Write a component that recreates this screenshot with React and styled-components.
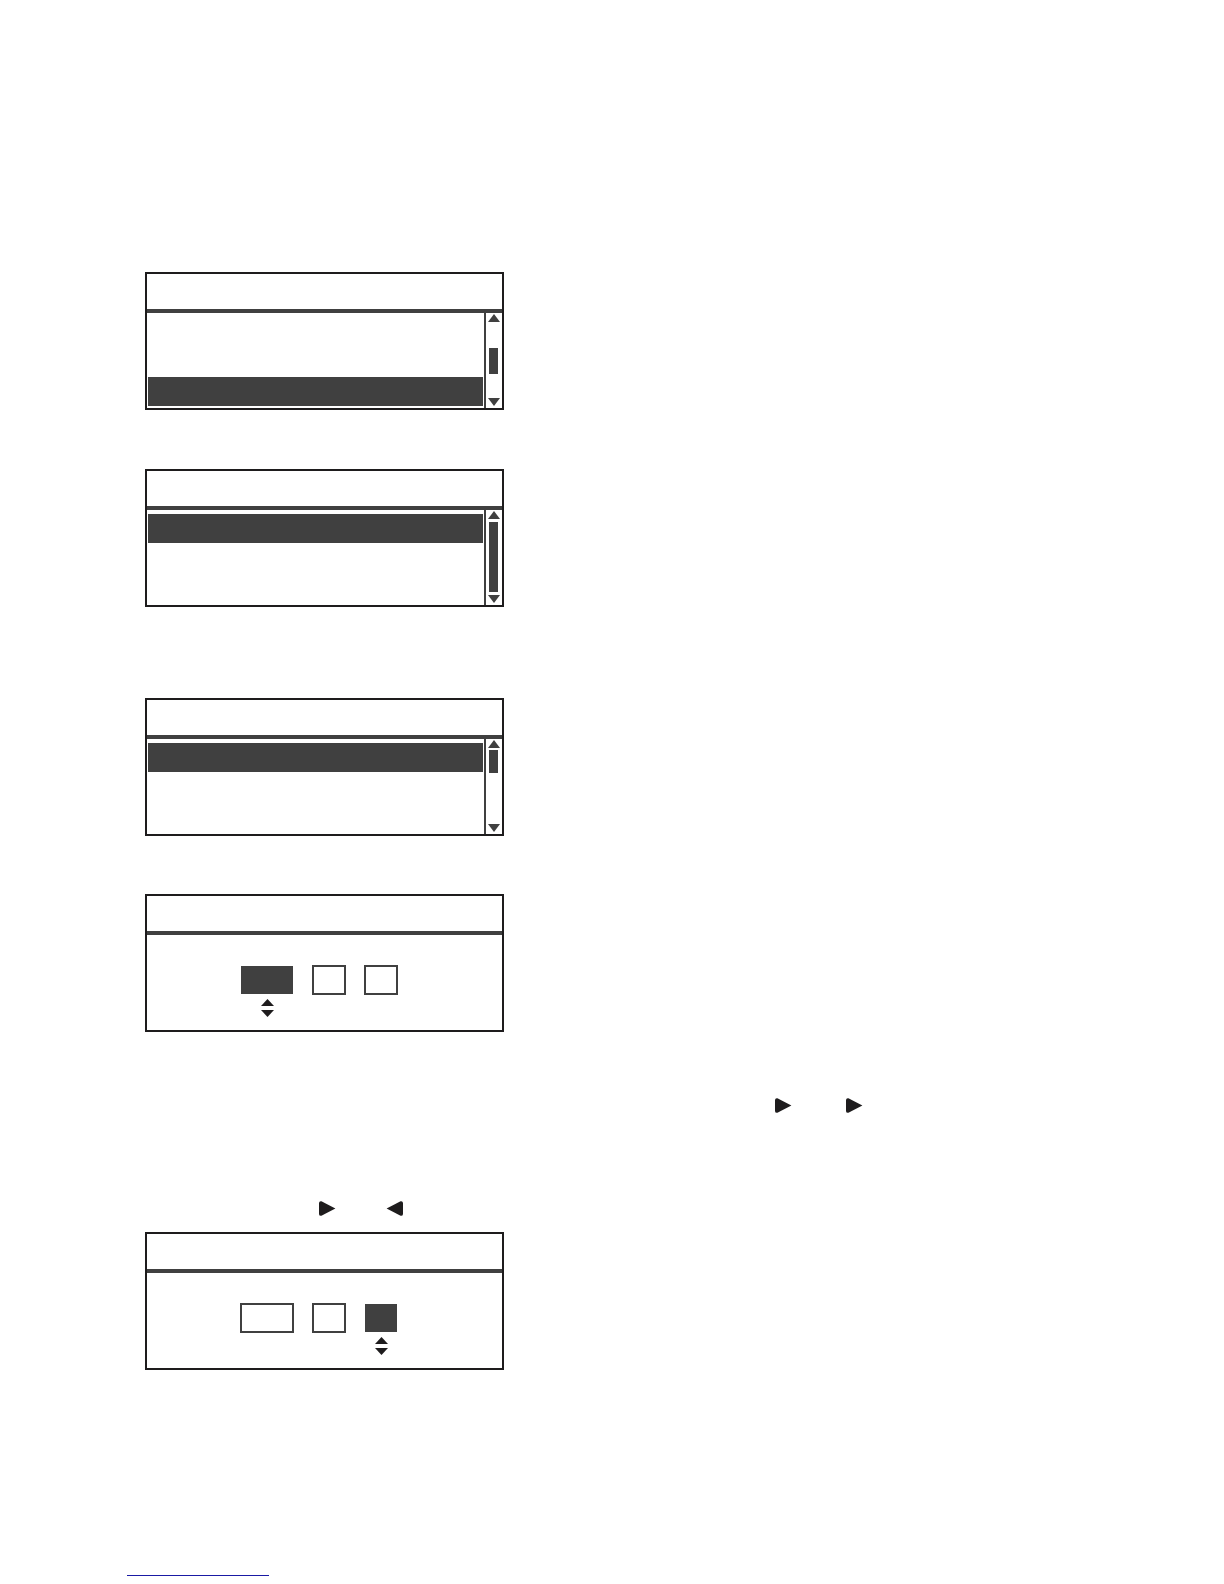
import React from "react";
import styled, { createGlobalStyle, css } from "styled-components";

const ink = "#1e1c1d";
const fill = "#404040";

const GlobalStyle = createGlobalStyle`
  *, *::before, *::after { box-sizing: border-box; }
  body {
    margin: 0;
    background: #fff;
    font-family: "Liberation Sans", Arial, sans-serif;
    font-size: 16px;
  }
  button, input { margin: 0; padding: 0; font: inherit; border: 0; border-radius: 0; background: none; }
  svg { display: block; }
`;

const Page = styled.main`
  display: flex;
  flex-direction: column;
  padding: 272px 40px 8px 145px;
`;

const Panel = styled.section`
  display: flex;
  flex-direction: column;
  width: 100%;
  max-width: 359px;
  margin-bottom: ${(p) => p.$after}px;
  border: 2px solid ${ink};
`;

const PanelHeader = styled.header`
  height: 39px;
  border-bottom: 4px solid ${fill};
`;

const ListBody = styled.div`
  display: flex;
  height: 95px;
`;

const Rows = styled.div`
  flex: 1;
  display: flex;
  flex-direction: column;
  gap: 1px;
  padding: 4px 1px 2px;
`;

const Row = styled.button`
  flex: 1;
  width: 100%;
  ${(p) => p.$selected && css`background: ${fill};`}
`;

const ScrollBar = styled.div`
  display: flex;
  flex-direction: column;
  align-items: center;
  width: 18px;
  padding: 1px 0 2px;
  border-left: 2px solid ${fill};
`;

const ArrowButton = styled.button`
  height: 8px;
`;

const Track = styled.div`
  flex: 1;
  width: 10px;
  padding-top: ${(p) => p.$offset}px;
`;

const Thumb = styled.div`
  width: 9px;
  height: ${(p) => p.$length}px;
  background: ${fill};
`;

const DateBody = styled.div`
  display: flex;
  justify-content: center;
  gap: 18px;
  height: 95px;
  padding: 30px 12px 0 0;
`;

const DateCell = styled.div`
  display: flex;
  flex-direction: column;
  align-items: center;
  gap: 4px;
`;

const DateField = styled.input`
  width: ${(p) => (p.$wide ? 54 : 34)}px;
  height: 30px;
  border: 2px solid ${fill};
  text-align: center;
  ${(p) => p.$selected && css`
    border: 1px solid transparent;
    background: ${fill};
    background-clip: padding-box;
    color: #fff;
  `}
`;

const Stepper = styled.div`
  display: flex;
  flex-direction: column;
  gap: 4px;
  padding-left: 2px;
`;

const StepButton = styled.button`
  height: 7px;
`;

const KeyLine = styled.div`
  display: flex;
  gap: ${(p) => p.$gap}px;
  padding-left: ${(p) => p.$indent}px;
  margin-bottom: ${(p) => p.$after}px;
`;

const FooterLink = styled.a`
  width: 142px;
  height: 1px;
  margin-left: -18px;
  background: #1a1aa4;
`;

function Triangle({ down, width, height, color }) {
  const d = down
    ? `M0 0H${width}L${width / 2} ${height}Z`
    : `M${width / 2} 0L${width} ${height}H0Z`;
  return (
    <svg width={width} height={height} viewBox={`0 0 ${width} ${height}`} aria-hidden="true">
      <path d={d} fill={color} />
    </svg>
  );
}

function KeyArrow({ left }) {
  return (
    <svg width="17" height="15" viewBox="0 0 17 15" role="img" aria-label={left ? "Left" : "Right"}>
      <path
        d={
          left
            ? "M0.6 7.5L14.6 0.2Q16.8 -0.2 17 2V13Q16.8 15.2 14.6 14.8Z"
            : "M16.4 7.5L2.4 0.2Q0.2 -0.2 0 2V13Q0.2 15.2 2.4 14.8Z"
        }
        fill={ink}
      />
    </svg>
  );
}

function ListPanel({ selected, offset, length, after }) {
  return (
    <Panel $after={after}>
      <PanelHeader />
      <ListBody>
        <Rows>
          {[0, 1, 2].map((i) => (
            <Row key={i} type="button" aria-label={`Item ${i + 1}`} $selected={i === selected} />
          ))}
        </Rows>
        <ScrollBar>
          <ArrowButton type="button" aria-label="Scroll up">
            <Triangle width={12} height={8} color={fill} />
          </ArrowButton>
          <Track $offset={offset}>
            <Thumb $length={length} />
          </Track>
          <ArrowButton type="button" aria-label="Scroll down">
            <Triangle down width={12} height={8} color={fill} />
          </ArrowButton>
        </ScrollBar>
      </ListBody>
    </Panel>
  );
}

const dateParts = ["Year", "Month", "Day"];

function DatePanel({ selected, after }) {
  return (
    <Panel $after={after}>
      <PanelHeader />
      <DateBody>
        {dateParts.map((name, i) => (
          <DateCell key={name}>
            <DateField type="text" aria-label={name} $wide={i === 0} $selected={i === selected} />
            {i === selected && (
              <Stepper>
                <StepButton type="button" aria-label={`Increase ${name}`}>
                  <Triangle width={13} height={7} color={ink} />
                </StepButton>
                <StepButton type="button" aria-label={`Decrease ${name}`}>
                  <Triangle down width={13} height={7} color={ink} />
                </StepButton>
              </Stepper>
            )}
          </DateCell>
        ))}
      </DateBody>
    </Panel>
  );
}

export default function App() {
  return (
    <>
      <GlobalStyle />
      <Page>
        <ListPanel selected={2} offset={26} length={26} after={59} />
        <ListPanel selected={0} offset={3} length={70} after={91} />
        <ListPanel selected={0} offset={2} length={23} after={58} />
        <DatePanel selected={0} after={66} />
        <KeyLine $indent={630} $gap={54} $after={88}>
          <KeyArrow />
          <KeyArrow />
        </KeyLine>
        <KeyLine $indent={174} $gap={50} $after={16}>
          <KeyArrow />
          <KeyArrow left />
        </KeyLine>
        <DatePanel selected={2} after={205} />
        <FooterLink href="#" aria-label="Website" />
      </Page>
    </>
  );
}
